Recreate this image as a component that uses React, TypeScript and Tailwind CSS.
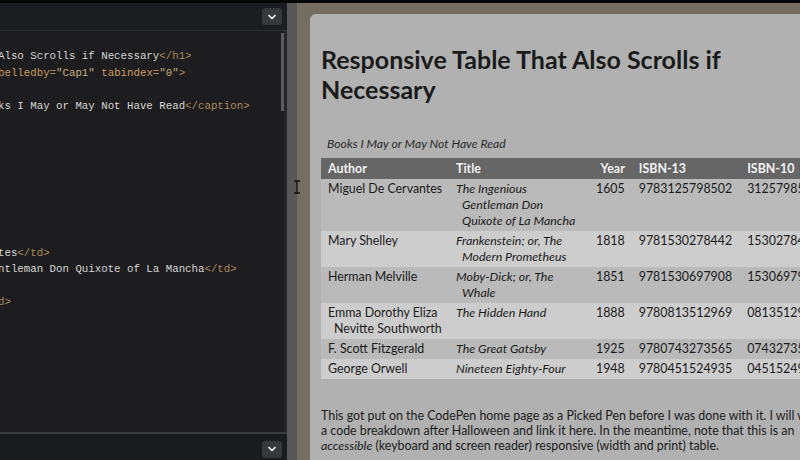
import { ChevronDown } from "lucide-react";

type Tok = { t: string; c?: string };

const TEXT = "text-[#d6d6d6]";
const TAG = "text-[#a98b5e]";
const ATTR = "text-[#c99c5e]";
const STR = "text-[#c7ad7d]";

const codeLines: Tok[][] = [
  [],
  [{ t: "Also Scrolls if Necessary", c: TEXT }, { t: "</h1>", c: TAG }],
  [{ t: "belledby", c: ATTR }, { t: "=", c: TAG }, { t: '"Cap1"', c: STR }, { t: " " }, { t: "tabindex", c: ATTR }, { t: "=", c: TAG }, { t: '"0"', c: STR }, { t: ">", c: TAG }],
  [],
  [{ t: "ks I May or May Not Have Read", c: TEXT }, { t: "</caption>", c: TAG }],
  [],
  [],
  [],
  [],
  [],
  [],
  [],
  [],
  [{ t: "tes", c: TEXT }, { t: "</td>", c: TAG }],
  [{ t: "ntleman Don Quixote of La Mancha", c: TEXT }, { t: "</td>", c: TAG }],
  [],
  [{ t: "d>", c: TAG }],
];

const books = [
  { author: "Miguel De Cervantes", title: "The Ingenious Gentleman Don Quixote of La Mancha", year: "1605", isbn13: "9783125798502", isbn10: "3125798507" },
  { author: "Mary Shelley", title: "Frankenstein; or, The Modern Prometheus", year: "1818", isbn13: "9781530278442", isbn10: "1530278449" },
  { author: "Herman Melville", title: "Moby-Dick; or, The Whale", year: "1851", isbn13: "9781530697908", isbn10: "1530697905" },
  { author: "Emma Dorothy Eliza Nevitte Southworth", title: "The Hidden Hand", year: "1888", isbn13: "9780813512969", isbn10: "0813512964" },
  { author: "F. Scott Fitzgerald", title: "The Great Gatsby", year: "1925", isbn13: "9780743273565", isbn10: "0743273567" },
  { author: "George Orwell", title: "Nineteen Eighty-Four", year: "1948", isbn13: "9780451524935", isbn10: "0451524934" },
];

function ChevronButton() {
  return (
    <div className="flex h-[17px] w-[20px] items-center justify-center rounded-[3px] bg-[#37383c]">
      <ChevronDown size={12} strokeWidth={3.5} className="text-[#e8e8e8]" />
    </div>
  );
}

function Editor() {
  return (
    <div className="flex w-[287px] shrink-0 flex-col bg-[#1d1d1f]">
      <div className="flex h-[28px] shrink-0 items-center justify-end border-b border-[#2b2c30] bg-[#1c1d20] pr-[5px]">
        <ChevronButton />
      </div>
      <div className="flex min-h-0 flex-1">
        <div className="min-w-0 flex-1 overflow-hidden pt-[1px] font-['Liberation_Mono',monospace] text-[10.75px] leading-[16.4px]">
          {codeLines.map((line, i) => (
            <div key={i} className="ml-[-2px] h-[16.4px] whitespace-pre">
              {line.map((tok, j) => (
                <span key={j} className={tok.c}>
                  {tok.t}
                </span>
              ))}
            </div>
          ))}
        </div>
        <div className="w-[3px] shrink-0 pt-[2px]">
          <div className="h-[78px] w-[3px] bg-[#5b5b5d]" />
        </div>
        <div className="w-[3px] shrink-0 bg-[#262628]" />
      </div>
      <div className="h-[2px] shrink-0 bg-[#3b3c40]" />
      <div className="flex h-[26px] shrink-0 items-center justify-end bg-[#1a1b1e] pr-[5px] pt-[4px]">
        <ChevronButton />
      </div>
    </div>
  );
}

function Preview() {
  return (
    <div className="relative min-w-0 flex-1 overflow-hidden bg-[#766d62] pl-[13px] pt-[11px]">
      <div className="w-[530px] rounded-tl-[6px] bg-[#b1b1b1] px-[11px] pt-[30px] font-['Lato','Noto_Sans',sans-serif] text-[#1b1b1b]">
        <h1 className="text-[25px] font-bold leading-[30px]">
          Responsive Table That Also Scrolls if Necessary
        </h1>
        <div className="mt-[32px] w-[600px]">
          <table className="table-fixed border-collapse text-[12.4px] leading-[16px]">
            <caption className="pb-[6px] pl-[6px] text-left text-[12.2px] italic text-[#2a2a2a]">
              Books I May or May Not Have Read
            </caption>
            <thead>
              <tr className="bg-[#666666] text-[#f2f2f2]">
                <th className="h-[21px] w-[129px] px-[7px] text-left font-bold">Author</th>
                <th className="w-[140px] px-[6px] text-left font-bold">Title</th>
                <th className="w-[39px] px-[6px] text-right font-bold">Year</th>
                <th className="w-[107px] px-[8px] text-left font-bold">ISBN-13</th>
                <th className="w-[100px] px-[7px] text-left font-bold">ISBN-10</th>
              </tr>
            </thead>
            <tbody>
              {books.map((b, i) => (
                <tr key={b.isbn13} className={i % 2 === 0 ? "bg-[#bababa]" : "bg-[#cdcdcd]"}>
                  <td className="py-[2px] pl-[13px] pr-[4px] align-top -indent-[6px]">{b.author}</td>
                  <td className="py-[2px] pl-[12px] pr-[6px] align-top italic -indent-[6px]">{b.title}</td>
                  <td className="px-[6px] py-[2px] text-right align-top">{b.year}</td>
                  <td className="px-[8px] py-[2px] align-top">{b.isbn13}</td>
                  <td className="px-[7px] py-[2px] align-top">{b.isbn10}</td>
                </tr>
              ))}
            </tbody>
          </table>
        </div>
        <p className="mt-[29px] w-[508px] pb-[20px] text-[12.4px] leading-[15px]">
          This got put on the CodePen home page as a Picked Pen before I was done with it. I will write a code
          breakdown after Halloween and link it here. In the meantime, note that this is an <em>accessible</em>{" "}
          (keyboard and screen reader) responsive (width and print) table.
        </p>
      </div>
    </div>
  );
}

export default function App() {
  return (
    <div className="flex h-[460px] w-[800px] flex-col overflow-hidden bg-[#050505]">
      <div className="h-[3px] shrink-0" />
      <div className="flex min-h-0 flex-1">
        <Editor />
        <div className="w-[10px] shrink-0 bg-[#575757]" />
        <Preview />
      </div>
      <svg className="absolute left-[293px] top-[180px]" width="8" height="14" viewBox="0 0 8 14">
        <path d="M1 1h6M4 1v12M1 13h6" stroke="#111" strokeWidth="1.3" fill="none" />
      </svg>
    </div>
  );
}
